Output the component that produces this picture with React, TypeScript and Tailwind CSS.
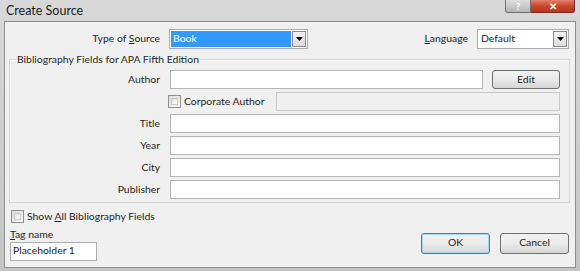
const font = { fontFamily: 'Lato, "Open Sans", Arial, sans-serif' };

function Arrow() {
  return (
    <svg width="7" height="4" viewBox="0 0 7 4">
      <path d="M0 0h7L3.5 4z" fill="#000" />
    </svg>
  );
}

function Combo({ value, selected, className }: { value: string; selected?: boolean; className: string }) {
  return (
    <div className={`flex h-[20px] items-stretch border border-[#abadb3] bg-white p-[1px] ${className}`}>
      <div
        className={`flex flex-1 items-center px-[2px] ${selected ? "bg-[#3399ff] text-white" : "text-[#1e1e1e]"}`}
      >
        {value}
      </div>
      <div className="ml-[1px] flex w-[14px] items-center justify-center border border-[#8a8a8a] bg-gradient-to-b from-[#f4f4f4] to-[#dcdcdc]">
        <Arrow />
      </div>
    </div>
  );
}

function Checkbox() {
  return (
    <div className="h-[13px] w-[13px] shrink-0 border border-[#8e8f8f] bg-gradient-to-br from-[#dcdcdc] to-[#fafafa] p-[2px]">
      <div className="h-full w-full border border-[#c7c7c7] bg-gradient-to-br from-[#e4e4e4] to-[#fdfdfd]" />
    </div>
  );
}

function Field({ label }: { label: string }) {
  return (
    <div className="flex h-[19px] items-center">
      <div className="w-[149px] text-right">{label}</div>
      <div className="ml-[10px] h-full flex-1 border border-[#b5b5b5] bg-white" />
    </div>
  );
}

function Button({ label, focused }: { label: string; focused?: boolean }) {
  return (
    <div
      className={`flex h-[21px] w-[69px] items-center justify-center rounded-[3px] border bg-gradient-to-b from-[#f2f2f2] via-[#ebebeb] to-[#d6d6d6] text-[#1e1e1e] ${
        focused ? "border-[#3c7fb1] shadow-[inset_0_0_0_1px_#a7d9f5]" : "border-[#707070]"
      }`}
    >
      {label}
    </div>
  );
}

export default function App() {
  return (
    <div
      className="flex h-[271px] w-[580px] flex-col bg-gradient-to-b from-[#d8d8d8] to-[#c4c4c4] text-[10.4px] text-[#1e1e1e]"
      style={font}
    >
      {/* title bar */}
      <div className="flex h-[21px] shrink-0 items-start">
        <div className="pl-[6px] pt-[2px] text-[12.5px] text-[#1a1a1a]">Create Source</div>
        <div className="ml-auto mr-[5px] flex h-[13px]">
          <div className="flex w-[26px] items-center justify-center rounded-bl-[3px] border border-t-0 border-[#6e6e6e] bg-gradient-to-b from-[#dedede] to-[#b6b6b6] text-[10px] font-bold leading-none text-white">
            ?
          </div>
          <div className="flex w-[44px] items-center justify-center rounded-br-[3px] border border-l-0 border-t-0 border-[#7a2d22] bg-gradient-to-b from-[#e3806a] via-[#c8442c] to-[#b53a22] text-[10px] font-bold leading-none text-white">
            ✕
          </div>
        </div>
      </div>

      {/* client area */}
      <div className="mx-[4px] flex h-[247px] flex-col border border-[#8d8d8d] bg-[#f0f0f0]">
        {/* type / language row */}
        <div className="mt-[7px] flex h-[20px] items-center pr-[6px]">
          <div className="w-[155px] text-right">
            Type of <span className="underline">S</span>ource
          </div>
          <Combo value="Book" selected className="ml-[9px] w-[139px]" />
          <div className="ml-auto mr-[9px]">
            <span className="underline">L</span>anguage
          </div>
          <Combo value="Default" className="w-[92px]" />
        </div>

        {/* group box */}
        <fieldset className="ml-[4px] mr-[5px] mt-[4px] border border-[#d5d5d5] pb-[3px] pl-[1px] pr-[9px] shadow-[inset_1px_1px_0_#fff]">
          <legend className="ml-[5px] px-[1px] leading-[13px]">Bibliography Fields for APA Fifth Edition</legend>
          <div className="mt-[4px] flex flex-col gap-[3px]">
            <div className="flex h-[19px] items-center">
              <div className="w-[149px] text-right">Author</div>
              <div className="ml-[10px] h-full w-[313px] border border-[#b5b5b5] bg-white" />
              <div className="ml-[9px] flex h-[19px] flex-1 items-center justify-center rounded-[3px] border border-[#707070] bg-gradient-to-b from-[#f2f2f2] via-[#ebebeb] to-[#d6d6d6]">
                Edit
              </div>
            </div>
            <div className="flex h-[19px] items-center">
              <div className="ml-[157px] flex w-[108px] items-center gap-[3px]">
                <Checkbox />
                <span>Corporate Author</span>
              </div>
              <div className="h-full flex-1 border border-[#c8c8c8] bg-[#f0f0f0]" />
            </div>
            <Field label="Title" />
            <Field label="Year" />
            <Field label="City" />
            <Field label="Publisher" />
          </div>
        </fieldset>

        {/* bottom */}
        <div className="mt-[6px] flex items-center gap-[3px] pl-[6px]">
          <Checkbox />
          <span>
            Show <span className="underline">A</span>ll Bibliography Fields
          </span>
        </div>
        <div className="flex items-end pl-[5px] pr-[6px]">
          <div className="flex flex-col">
            <div className="mt-[2px] leading-[14px]">
              <span className="underline">T</span>ag name
            </div>
            <div className="mt-[1px] flex h-[19px] w-[87px] items-center border border-[#abadb3] bg-white px-[2px]">
              Placeholder 1
            </div>
          </div>
          <div className="mb-[7px] ml-auto flex gap-[10px]">
            <Button label="OK" focused />
            <Button label="Cancel" />
          </div>
        </div>
      </div>
    </div>
  );
}
